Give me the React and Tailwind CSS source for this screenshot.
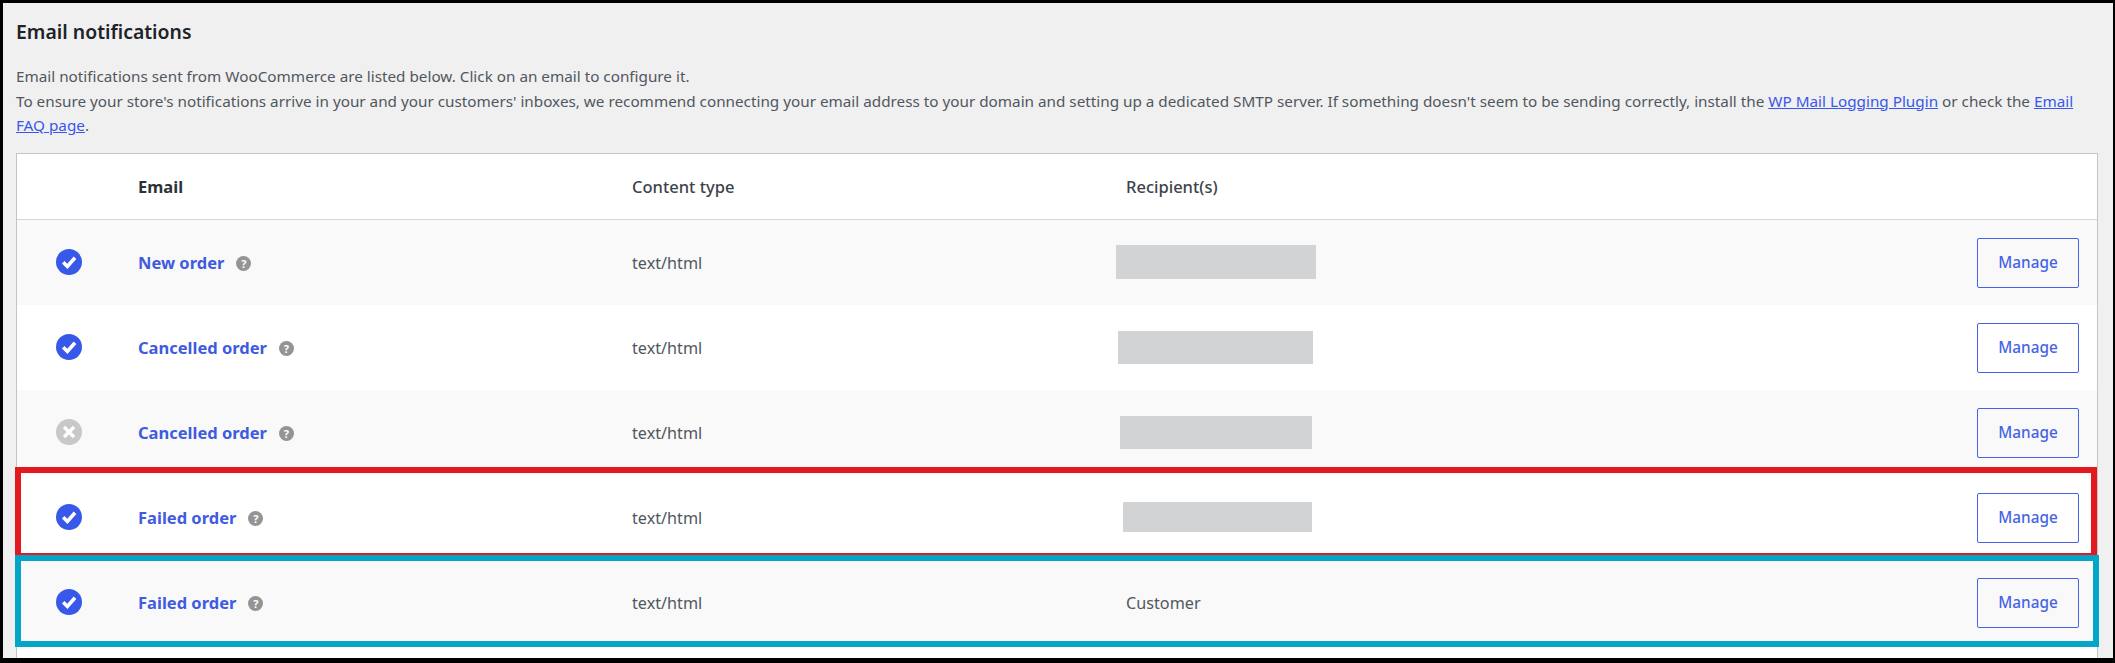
const rows = [
  { name: "New order", on: true, bg: "bg-[#f9f9f9]", mask: "w-[200px] h-[34px] ml-[-10px]" },
  { name: "Cancelled order", on: true, bg: "bg-white", mask: "w-[195px] h-[33px] ml-[-8px] mt-[1px]" },
  { name: "Cancelled order", on: false, bg: "bg-[#f9f9f9]", mask: "w-[192px] h-[33px] ml-[-6px]" },
  { name: "Failed order", on: true, bg: "bg-white", mask: "w-[189px] h-[30px] ml-[-3px]" },
  { name: "Failed order", on: true, bg: "bg-[#f9f9f9]", customer: true },
];

function StatusIcon({ on }) {
  return on ? (
    <svg viewBox="0 0 26 26" className="w-[26px] h-[26px]">
      <circle cx="13" cy="13" r="13" fill="#3858e9" />
      <path d="M7.2 13.2L11.4 17.4L19 8.8" fill="none" stroke="#fff" strokeWidth="3.6" />
    </svg>
  ) : (
    <svg viewBox="0 0 26 26" className="w-[26px] h-[26px]">
      <circle cx="13" cy="13" r="13" fill="#c8c8c8" />
      <path d="M8 8L18 18M18 8L8 18" fill="none" stroke="#fff" strokeWidth="3.4" />
    </svg>
  );
}

function Row({ row }) {
  return (
    <div className={`grid grid-cols-[121px_494px_494px_1fr_auto] items-center h-[85px] pr-[18px] ${row.bg}`}>
      <div className="flex justify-center pr-[17px] mt-[-1px]">
        <StatusIcon on={row.on} />
      </div>
      <div className="flex items-center gap-[12px] pt-[2px]">
        <a className="text-[16.5px] font-bold text-[#3f5be0]">{row.name}</a>
        <span className="flex items-center justify-center w-[15px] h-[15px] rounded-full bg-[#949494] text-white text-[11px] font-bold leading-none">?</span>
      </div>
      <div className="text-[16.2px] pt-[2px]">text/html</div>
      <div className={row.customer ? "pt-[2px]" : ""}>
        {row.customer ? (
          <span className="text-[16.2px]">Customer</span>
        ) : (
          <div className={`bg-[#d1d3d4] ${row.mask}`} />
        )}
      </div>
      <button className="w-[102px] h-[50px] mt-[1px] border border-[#4663e6] rounded-[2px] text-[#4663e6] text-[15.3px] font-medium">Manage</button>
    </div>
  );
}

export default function App() {
  return (
    <div className="relative h-[663px] w-[2115px] overflow-hidden bg-[#f0f0f1] border-black border-t-[3px] border-l-[3px] border-r-[2px] border-b-[5px] pl-[13px] pr-[15px] pt-[17px] flex flex-col font-['Noto_Sans',sans-serif] text-[#50575e]">
      <h2 className="text-[19.4px] leading-[24px] font-semibold text-[#1d2327]">Email notifications</h2>
      <div className="mt-[20px] leading-[24.5px] text-[15.27px]">
        <p>Email notifications sent from WooCommerce are listed below. Click on an email to configure it.</p>
        <p>
          To ensure your store's notifications arrive in your and your customers' inboxes, we recommend connecting your email address to your domain and setting up a dedicated SMTP server. If something doesn't seem to be sending correctly, install the{" "}
          <a className="text-[#3858e9] underline">WP Mail Logging Plugin</a> or check the{" "}
          <a className="text-[#3858e9] underline">Email FAQ page</a>.
        </p>
      </div>
      <div className="mt-[15px] flex-1 bg-white border-x border-t border-[#c3c4c7]">
        <div className="grid grid-cols-[121px_494px_494px_1fr] items-center h-[66px] border-b border-[#d5d5d7] text-[16.5px] pt-[2px]">
          <div />
          <div className="font-bold text-[#2c3338]">Email</div>
          <div className="font-medium text-[#3c434a]">Content type</div>
          <div className="font-medium text-[#3c434a]">Recipient(s)</div>
        </div>
        {rows.map((row, i) => (
          <Row key={i} row={row} />
        ))}
      </div>
      <div className="absolute left-[12px] top-[464px] w-[2082px] h-[92px] border-[6px] border-[#e21a1f]" />
      <div className="absolute left-[12px] top-[552px] w-[2084px] h-[92px] border-[6px] border-[#04a6c8]" />
    </div>
  );
}
